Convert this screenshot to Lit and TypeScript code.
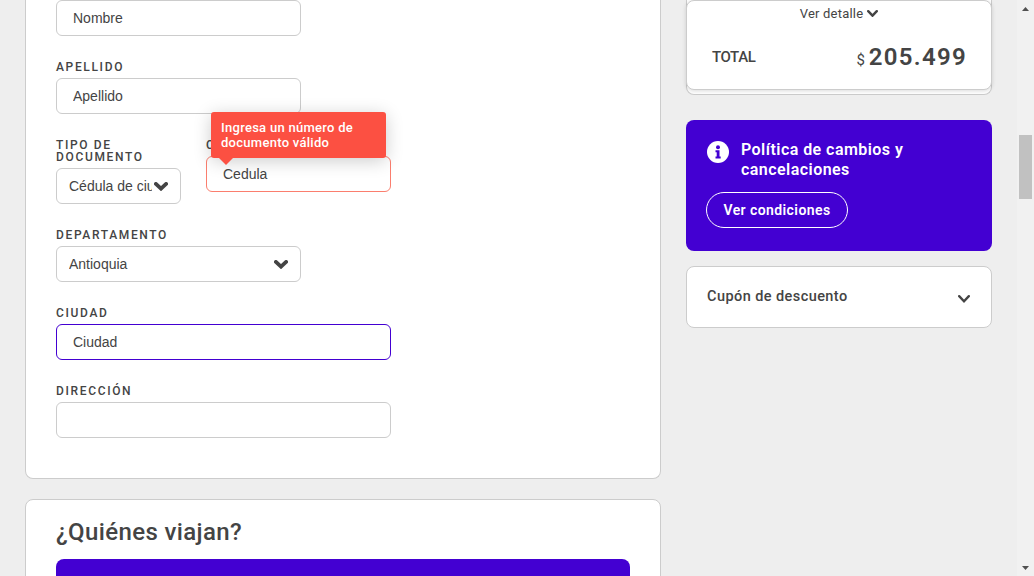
import { LitElement, html, css, svg } from "lit";
import { customElement, property } from "lit/decorators.js";
import { classMap } from "lit/directives/class-map.js";

@customElement("chevron-icon")
class ChevronIcon extends LitElement {
  @property({ type: Number }) width = 14;
  @property({ type: Number }) height = 9;
  @property({ type: Number }) weight = 3;
  static styles = css`
    :host { display: block; flex: none; color: #444; }
    svg { display: block; }
  `;
  render() {
    const m = this.weight * 0.5;
    const { width: w, height: h } = this;
    return html`<svg width=${w} height=${h} viewBox="0 0 ${w} ${h}">
      ${svg`<path d="M${m} ${m} L${w / 2} ${h - this.weight * 0.75} L${w - m} ${m}" fill="none" stroke="currentColor" stroke-linecap="round" stroke-width=${this.weight}/>`}
    </svg>`;
  }
}

@customElement("form-field")
class FormField extends LitElement {
  @property() label = "";
  @property() text = "";
  @property() kind = "input";
  @property() state = "";
  @property() error = "";
  static styles = css`
    :host { display: block; position: relative; }
    .label {
      font: 500 12px/12px Roboto, sans-serif;
      letter-spacing: 1.65px;
      text-transform: uppercase;
      padding-top: 1px;
      margin-bottom: 5px;
      color: #444;
    }
    .box {
      box-sizing: border-box;
      display: flex;
      align-items: center;
      height: 36px;
      padding: 0 16px;
      border: 1px solid #ccc;
      border-radius: 6px;
      background: #fff;
      font: 14px/16px "Liberation Sans", Arial, sans-serif;
      color: #444;
    }
    .select { padding: 0 12px; }
    .select .value { margin-right: 2px; }
    .select chevron-icon { margin-top: 1px; }
    .value { flex: 1; overflow: hidden; white-space: nowrap; }
    .focus { border-color: #4300d2; }
    .invalid { border-color: #fb7e6e; }
    .tip {
      position: absolute;
      left: 5px;
      bottom: 34px;
      box-sizing: border-box;
      width: 175px;
      height: 46px;
      padding: 8px 10px;
      border-radius: 3px;
      background: #fc5042;
      color: #fff;
      font: 500 13px/15px Roboto, sans-serif;
      letter-spacing: 0.28px;
      white-space: nowrap;
      box-shadow: 0 3px 18px rgba(0, 0, 0, 0.2);
    }
    .tip::after {
      content: "";
      position: absolute;
      left: 7px;
      top: 100%;
      margin-top: -1px;
      border: 8px solid transparent;
      border-top-color: #fc5042;
      border-bottom: 0;
    }
  `;
  render() {
    const select = this.kind === "select";
    return html`
      ${this.label ? html`<div class="label">${this.label}</div>` : ""}
      <div class=${classMap({ box: true, select, focus: this.state === "focus", invalid: this.state === "invalid" })}>
        <span class="value">${this.text}</span>
        ${select ? html`<chevron-icon .width=${14} .height=${9.5} .weight=${3.8}></chevron-icon>` : ""}
      </div>
      ${this.error ? html`<div class="tip">${this.error.split("|").map((l) => html`<div>${l}</div>`)}</div>` : ""}
    `;
  }
}

@customElement("app-root")
class AppRoot extends LitElement {
  static styles = css`
    :host {
      display: flex;
      height: 576px;
      overflow: hidden;
      background: #eee;
      color: #444;
      font-family: Roboto, sans-serif;
      font-weight: 500;
    }
    .main { width: 636px; margin-left: 25px; flex: none; }
    .card {
      box-sizing: border-box;
      background: #fff;
      border: 1px solid #ccc;
      border-radius: 8px;
    }
    .form {
      height: 479px;
      padding: 0 30px;
      border-top: 0;
      border-radius: 0 0 8px 8px;
      display: flex;
      flex-direction: column;
      gap: 24px;
    }
    .short { width: 245px; }
    .long { width: 335px; }
    .row { display: flex; align-items: flex-start; gap: 25px; }
    .doc { width: 125px; }
    .num { width: 185px; }
    .travellers { margin-top: 20px; height: 120px; padding: 17px 30px; }
    h2 { margin: 0; font: 500 24px/30px Roboto, sans-serif; letter-spacing: 0.38px; }
    .banner { margin-top: 12px; height: 60px; border-radius: 8px; background: #4300d2; }
    .side { width: 306px; margin-left: 25px; flex: none; }
    .under { height: 95px; border-top: 0; border-radius: 0 0 8px 8px; }
    .summary { height: 90px; margin: 0 -1px; padding: 4px 25px; box-shadow: 0 1px 4px rgba(0, 0, 0, 0.15); }
    .detail {
      display: flex;
      justify-content: center;
      align-items: center;
      gap: 4px;
      font: 400 13px/18px Roboto, sans-serif;
      letter-spacing: 0.2px;
    }
    .detail chevron-icon { margin-top: -1px; }
    .total { display: flex; align-items: baseline; margin-top: 18px; line-height: 32px; white-space: nowrap; }
    .name { font-size: 15px; letter-spacing: -0.4px; flex: 1; position: relative; top: -3px; }
    .cur { font-size: 15px; font-weight: 400; margin-right: 4px; }
    .amount { font-size: 24px; font-weight: 600; letter-spacing: 1.3px; margin-right: -1px; }
    .policy {
      box-sizing: border-box;
      margin-top: 25px;
      height: 131px;
      padding: 20px;
      border-radius: 8px;
      background: #4300d2;
      color: #fff;
    }
    .head { display: flex; font-size: 16px; font-weight: 600; line-height: 20px; letter-spacing: 0.45px; white-space: nowrap; }
    .info { margin: 1px 12px 0 1px; flex: none; }
    .pill {
      box-sizing: border-box;
      display: flex;
      align-items: center;
      justify-content: center;
      width: 142px;
      height: 36px;
      margin-top: 12px;
      border: 1px solid #fff;
      border-radius: 18px;
      font-size: 14px;
      font-weight: 600;
      letter-spacing: 0.42px;
      white-space: nowrap;
    }
    .coupon {
      margin-top: 15px;
      height: 62px;
      padding: 0 21px 0 20px;
      display: flex;
      align-items: center;
      justify-content: space-between;
      font-size: 14.5px;
      letter-spacing: 0.43px;
    }
    .coupon span { margin-top: -1px; }
    .coupon chevron-icon { margin-top: 3px; }
    .scroll {
      width: 17px;
      margin-left: auto;
      flex: none;
      box-sizing: border-box;
      padding: 7px 2px 6px;
      display: flex;
      flex-direction: column;
      align-items: center;
      background: #f1f1f1;
    }
    .thumb { width: 13px; height: 64px; margin-top: 124px; background: #c1c1c1; }
    .down { margin-top: auto; }
    .scroll svg { display: block; flex: none; }
  `;
  render() {
    return html`
      <main class="main">
        <section class="card form">
          <form-field class="short" text="Nombre"></form-field>
          <form-field class="short" label="Apellido" text="Apellido"></form-field>
          <div class="row">
            <form-field class="doc" kind="select" label="Tipo de documento" text="Cédula de ciudadanía"></form-field>
            <form-field class="num" label="Cédula" text="Cedula" state="invalid" error="Ingresa un número de|documento válido"></form-field>
          </div>
          <form-field class="short" kind="select" label="Departamento" text="Antioquia"></form-field>
          <form-field class="long" label="Ciudad" text="Ciudad" state="focus"></form-field>
          <form-field class="long" label="Dirección"></form-field>
        </section>
        <section class="card travellers">
          <h2>¿Quiénes viajan?</h2>
          <div class="banner"></div>
        </section>
      </main>
      <aside class="side">
        <div class="card under">
          <div class="card summary">
            <div class="detail">Ver detalle <chevron-icon .width=${11} .height=${7.5} .weight=${2.4}></chevron-icon></div>
            <div class="total"><span class="name">TOTAL</span><span class="cur">$</span><span class="amount">205.499</span></div>
          </div>
        </div>
        <div class="policy">
          <div class="head">
            <svg class="info" width="22" height="22" viewBox="0 0 22 22">
              <circle cx="11" cy="11" r="11" fill="#fff"/>
              <circle cx="11" cy="6.3" r="2" fill="#4300d2"/>
              <path d="M8.5 9.3h4v6.3h1.2v2H8.5v-2h1.2v-4.3H8.5z" fill="#4300d2"/>
            </svg>
            <div>Política de cambios y<br>cancelaciones</div>
          </div>
          <div class="pill">Ver condiciones</div>
        </div>
        <div class="card coupon">
          <span>Cupón de descuento</span>
          <chevron-icon .width=${12} .height=${8} .weight=${2.3}></chevron-icon>
        </div>
      </aside>
      <div class="scroll">
        <svg width="7" height="4" viewBox="0 0 7 4"><path d="M0 4 3.5 0 7 4z" fill="#505050"/></svg>
        <div class="thumb"></div>
        <svg class="down" width="7" height="4" viewBox="0 0 7 4"><path d="M0 0 3.5 4 7 0z" fill="#505050"/></svg>
      </div>
    `;
  }
}
